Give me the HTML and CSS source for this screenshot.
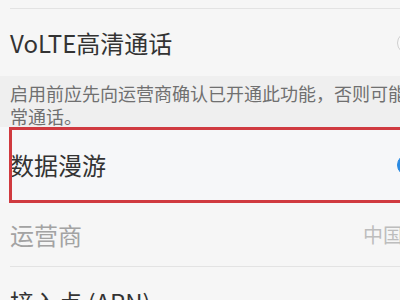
FILE: index.html
```html
<!DOCTYPE html>
<html lang="zh-CN">
<head>
    <meta charset="UTF-8">
    <meta name="viewport" content="width=device-width, initial-scale=1.0">
    <title>移动网络</title>
    <link rel="stylesheet" href="styles.css">
</head>
<body>
    <div class="list">
        <div class="item item-prev"></div>

        <div class="item item-volte">
            <span class="item-title">VoLTE高清通话</span>
            <span class="switch"></span>
        </div>

        <div class="note">
            启用前应先向运营商确认已开通此功能，否则可能无法正常通话。
        </div>

        <div class="item item-roaming">
            <span class="item-title">数据漫游</span>
            <span class="switch on"></span>
            <div class="highlight"></div>
        </div>

        <div class="item item-carrier">
            <span class="item-title muted">运营商</span>
            <span class="item-value">中国移动</span>
        </div>

        <div class="item item-apn">
            <span class="item-title">接入点 (APN)</span>
        </div>
    </div>
</body>
</html>
```

FILE: styles.css
```css
* {
    margin: 0;
    padding: 0;
    box-sizing: border-box;
    font-family: "Noto Sans CJK SC", "Noto Sans", sans-serif;
}

body {
    width: 400px;
    height: 300px;
    overflow: hidden;
    background-color: #f6f6f6;
}

.list {
    width: 400px;
}

.item {
    display: flex;
    align-items: center;
    justify-content: space-between;
    margin-left: 10px;
    border-bottom: 1px solid #e3e3e3;
    white-space: nowrap;
}

.item-prev {
    height: 9px;
}

.item-volte {
    height: 67px;
    border-bottom: none;
}

.item-title {
    font-size: 24px;
    color: #333;
    line-height: 1;
}

.item-title.muted {
    color: #a3a3a3;
}

.item-value {
    font-size: 20px;
    color: #bdbdbd;
    margin-right: -43px;
}

.note {
    height: 51px;
    padding: 6px 0 0 10px;
    background-color: #efefef;
    color: #707070;
    font-size: 18px;
    line-height: 23px;
    width: 460px;
}

.item-roaming {
    position: relative;
    height: 76px;
    margin-left: 0;
    padding-left: 10px;
    background-color: #f6f7f9;
    border-bottom: none;
}

.highlight {
    position: absolute;
    left: 9px;
    top: 0;
    right: -10px;
    bottom: 0;
    border: 3px solid #d03a40;
}

.item-carrier {
    height: 64px;
}

.item-apn {
    height: 70px;
    border-bottom: none;
}

.switch {
    flex: none;
    width: 46px;
    height: 22px;
    border-radius: 11px;
    margin-right: -43px;
    background-color: #fafafa;
    border: 1px solid #cfcfcf;
}

.switch.on {
    background-color: #2a8ae2;
    border-color: #2a8ae2;
}
```
